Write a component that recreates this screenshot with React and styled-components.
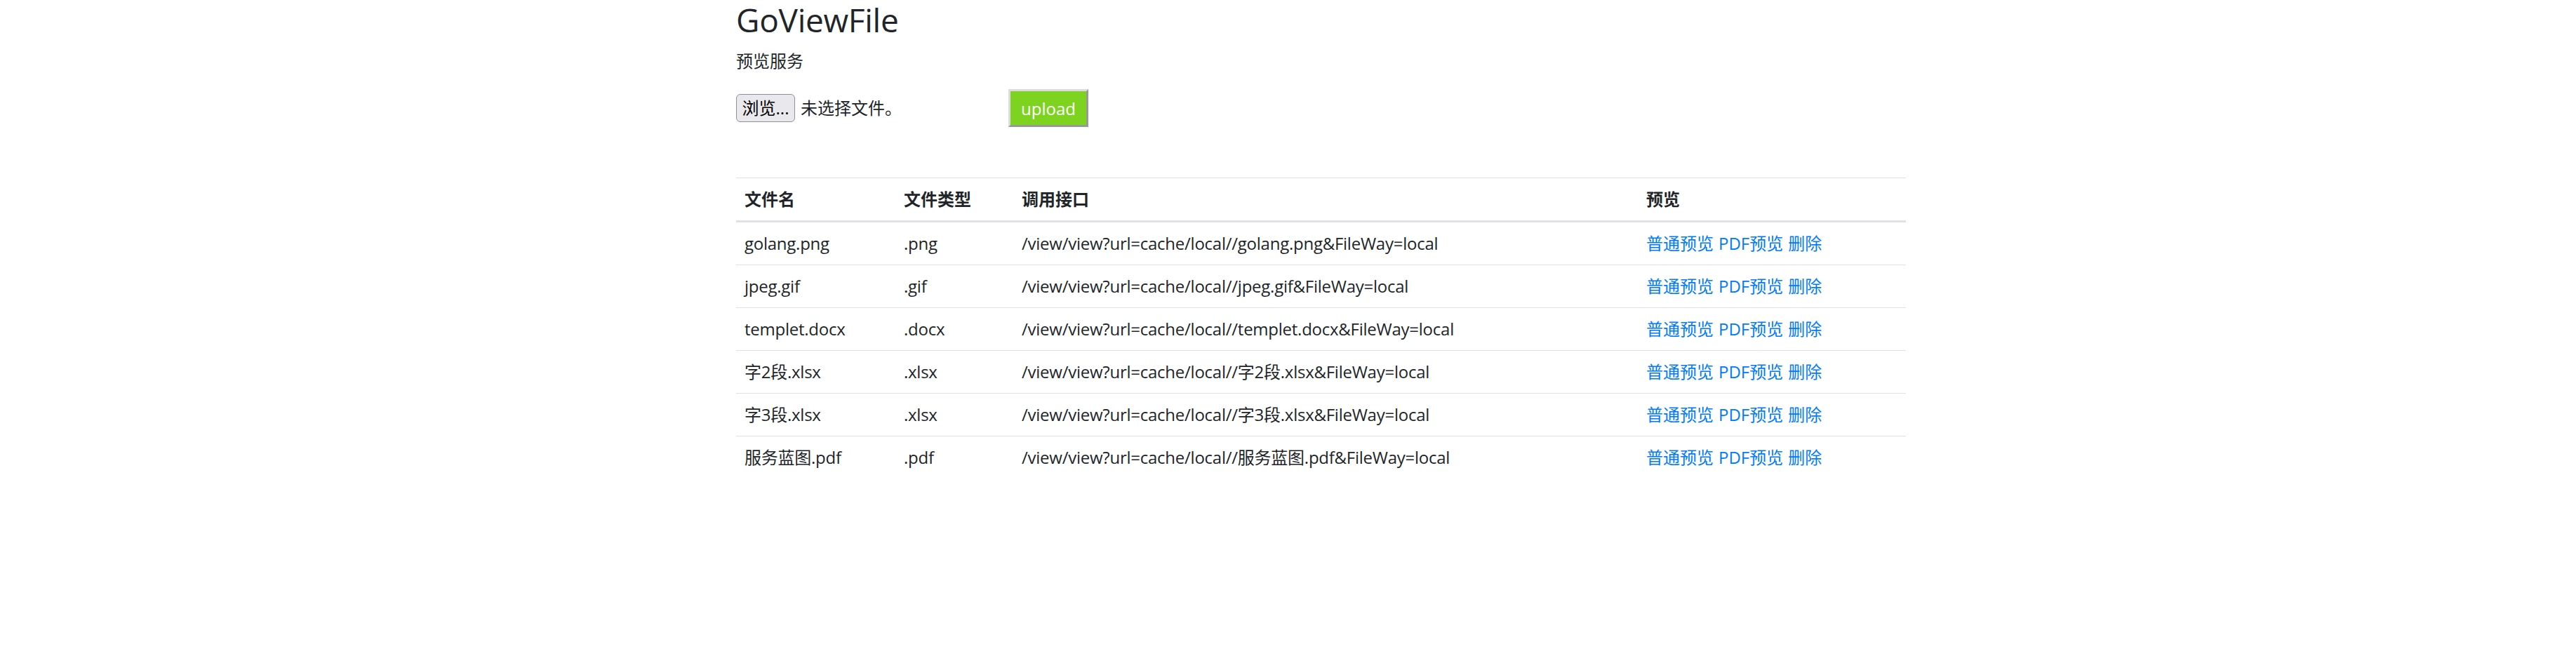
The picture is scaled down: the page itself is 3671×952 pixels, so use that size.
import React from "react";
import styled, { createGlobalStyle } from "styled-components";

const GlobalStyle = createGlobalStyle`
  html, body {
    margin: 0;
    padding: 0;
    background: #fff;
  }
  body {
    font-family: "Open Sans", "Noto Sans CJK SC", sans-serif;
    font-size: 24px;
    line-height: 36px;
    color: #212529;
  }
`;

const files = [
  { name: "golang.png", type: ".png" },
  { name: "jpeg.gif", type: ".gif" },
  { name: "templet.docx", type: ".docx" },
  { name: "字2段.xlsx", type: ".xlsx" },
  { name: "字3段.xlsx", type: ".xlsx" },
  { name: "服务蓝图.pdf", type: ".pdf" },
];

const Page = styled.div`
  padding-left: 94px;
`;

const Container = styled.div`
  width: 1667px;
  margin: 0 auto;
`;

const Title = styled.h2`
  margin: 0;
  font-size: 46px;
  font-weight: 400;
  line-height: 56px;
  letter-spacing: -0.3px;
`;

const Subtitle = styled.p`
  margin: 13px 0 0;
  font-size: 24px;
`;

const UploadForm = styled.form`
  display: flex;
  align-items: center;
  margin-top: 22px;
  height: 54px;
`;

const FilePicker = styled.label`
  display: flex;
  align-items: center;
  gap: 8px;
  width: 388px;
  cursor: pointer;
`;

const BrowseButton = styled.span`
  display: inline-flex;
  align-items: center;
  justify-content: center;
  width: 84px;
  height: 40px;
  box-sizing: border-box;
  border: 1px solid #8f8f9d;
  border-radius: 6px;
  background: #e9e9ed;
  font-size: 24px;
  color: #000;
`;

const FileStatus = styled.span`
  font-size: 24px;
`;

const HiddenInput = styled.input`
  display: none;
`;

const UploadButton = styled.button`
  width: 114px;
  height: 54px;
  box-sizing: border-box;
  border: 3px solid;
  border-color: #dcdcdc #999 #999 #dcdcdc;
  background: #7ed321;
  color: #fff;
  font-family: inherit;
  font-size: 24px;
  padding: 0;
`;

const Table = styled.table`
  width: 100%;
  margin-top: 72px;
  border-collapse: collapse;
  table-layout: fixed;
`;

const Th = styled.th`
  padding: 12px;
  text-align: left;
  font-weight: 700;
  border-top: 1px solid #dee2e6;
  border-bottom: 3px solid #dee2e6;
  vertical-align: bottom;
`;

const Td = styled.td`
  padding: 12px;
  border-top: 1px solid #dee2e6;
  white-space: nowrap;
  letter-spacing: ${(p) => (p.$tight ? "-0.25px" : "0")};
`;

const Action = styled.a`
  color: #007bff;
  text-decoration: none;
  margin-right: 7px;
`;

export default function App() {
  return (
    <>
      <GlobalStyle />
      <Page>
        <Container>
          <Title>GoViewFile</Title>
          <Subtitle>预览服务</Subtitle>
          <UploadForm onSubmit={(e) => e.preventDefault()}>
            <FilePicker>
              <BrowseButton>浏览...</BrowseButton>
              <FileStatus>未选择文件。</FileStatus>
              <HiddenInput type="file" />
            </FilePicker>
            <UploadButton type="submit">upload</UploadButton>
          </UploadForm>
          <Table>
            <colgroup>
              <col style={{ width: "227px" }} />
              <col style={{ width: "168px" }} />
              <col style={{ width: "890px" }} />
              <col />
            </colgroup>
            <thead>
              <tr>
                <Th>文件名</Th>
                <Th>文件类型</Th>
                <Th>调用接口</Th>
                <Th>预览</Th>
              </tr>
            </thead>
            <tbody>
              {files.map((f) => (
                <tr key={f.name}>
                  <Td $tight>{f.name}</Td>
                  <Td $tight>{f.type}</Td>
                  <Td $tight>/view/view?url=cache/local//{f.name}&FileWay=local</Td>
                  <Td>
                    <Action href="#">普通预览</Action>
                    <Action href="#">PDF预览</Action>
                    <Action href="#">删除</Action>
                  </Td>
                </tr>
              ))}
            </tbody>
          </Table>
        </Container>
      </Page>
    </>
  );
}
